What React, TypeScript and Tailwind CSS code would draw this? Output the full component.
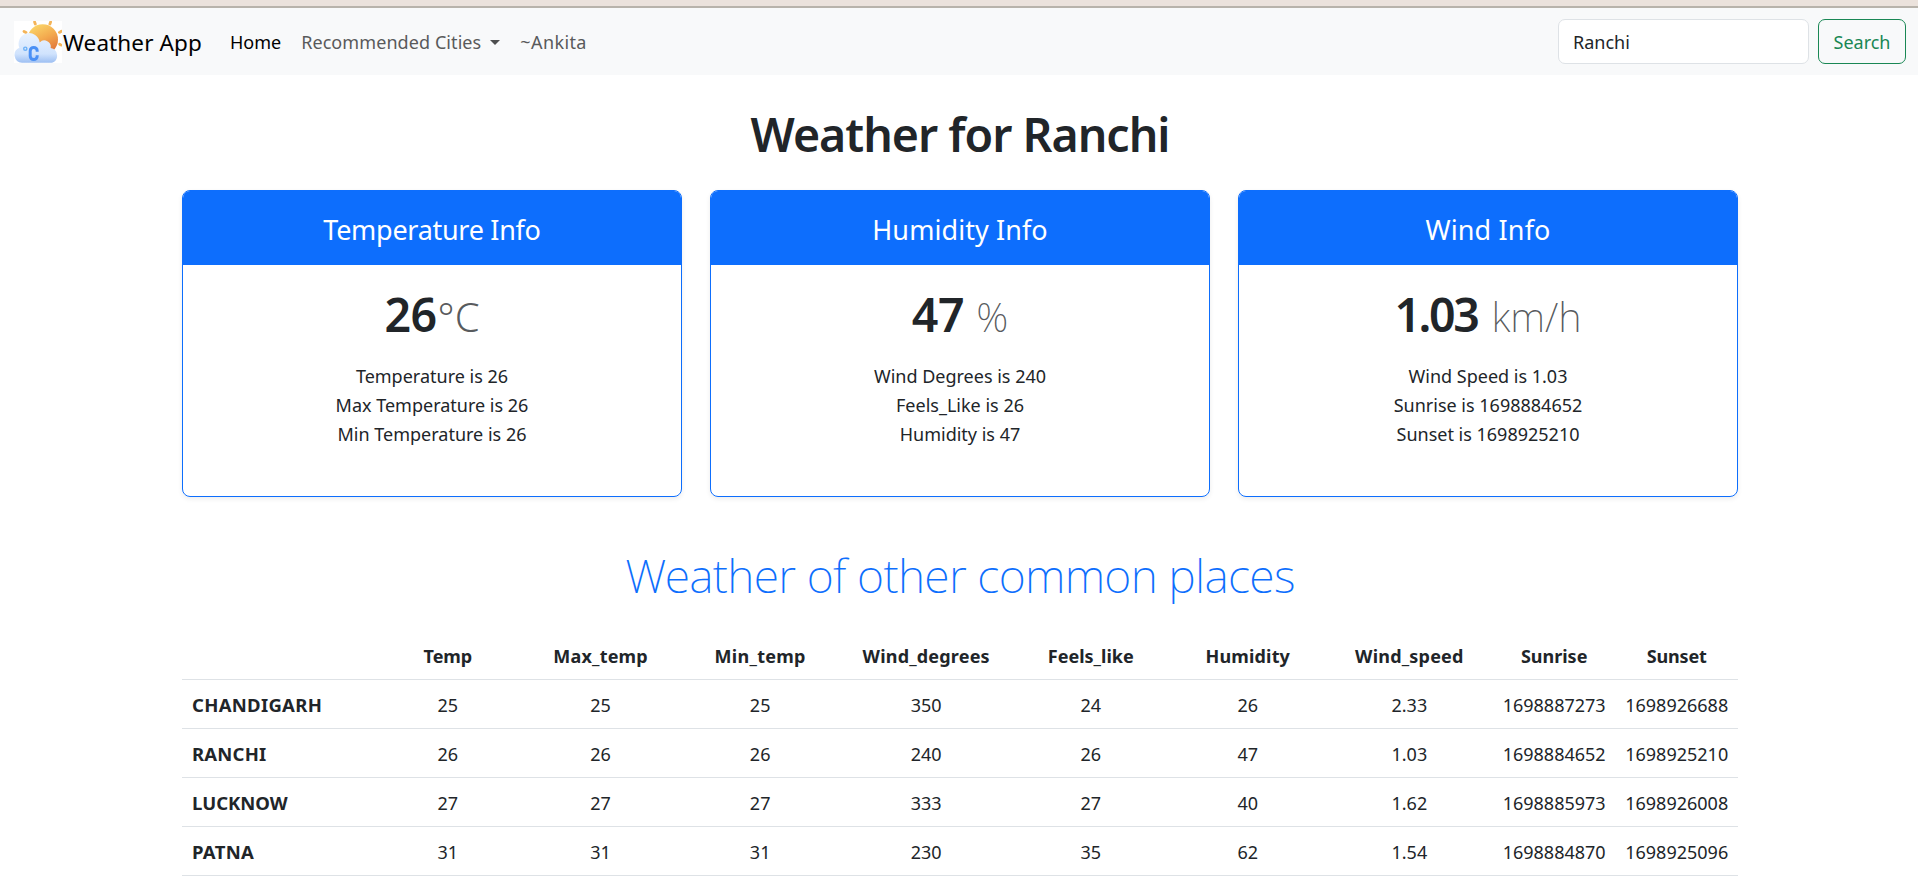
import React from "react";

const cards = [
  {
    title: "Temperature Info",
    titleClass: "tracking-[-0.29px]",
    value: "26",
    valueClass: "tracking-[-0.5px]",
    unit: "°C",
    unitClass: "font-light ml-px",
    lines: ["Temperature is 26", "Max Temperature is 26", "Min Temperature is 26"],
  },
  {
    title: "Humidity Info",
    titleClass: "tracking-[0.07px]",
    value: "47",
    valueClass: "tracking-[-0.3px]",
    unit: "%",
    unitClass: "font-extralight ml-[12px]",
    lines: ["Wind Degrees is 240", "Feels_Like is 26", "Humidity is 47"],
  },
  {
    title: "Wind Info",
    titleClass: "tracking-[0.14px]",
    value: "1.03",
    valueClass: "tracking-[-2.4px]",
    unit: "km/h",
    unitClass: "font-extralight ml-[14px]",
    lines: ["Wind Speed is 1.03", "Sunrise is 1698884652", "Sunset is 1698925210"],
  },
];

const columns = [
  { label: "", className: "w-[192px]" },
  { label: "Temp", className: "w-[147.5px] tracking-[-0.1px]" },
  { label: "Max_temp", className: "w-[158px] tracking-[0.19px]" },
  { label: "Min_temp", className: "w-[161px] tracking-[0.28px]" },
  { label: "Wind_degrees", className: "w-[171px] tracking-[0.19px]" },
  { label: "Feels_like", className: "w-[158px]" },
  { label: "Humidity", className: "w-[156px] tracking-[0.15px]" },
  { label: "Wind_speed", className: "w-[167px] tracking-[0.2px]" },
  { label: "Sunrise", className: "w-[122.5px]" },
  { label: "Sunset", className: "w-[122.5px] tracking-[-0.2px]" },
];

const rows = [
  { city: "CHANDIGARH", className: "tracking-[0.3px]", values: ["25", "25", "25", "350", "24", "26", "2.33", "1698887273", "1698926688"] },
  { city: "RANCHI", className: "tracking-[0.2px]", values: ["26", "26", "26", "240", "26", "47", "1.03", "1698884652", "1698925210"] },
  { city: "LUCKNOW", className: "tracking-[0px]", values: ["27", "27", "27", "333", "27", "40", "1.62", "1698885973", "1698926008"] },
  { city: "PATNA", className: "tracking-[0.3px]", values: ["31", "31", "31", "230", "35", "62", "1.54", "1698884870", "1698925096"] },
];

function Logo() {
  return (
    <svg width="48" height="42" viewBox="0 0 48 42" className="block shrink-0">
      <defs>
        <linearGradient id="sun" x1="0.2" y1="0" x2="0.7" y2="1">
          <stop offset="0" stopColor="#fbd96b" />
          <stop offset="0.5" stopColor="#f3a94e" />
          <stop offset="1" stopColor="#de6f38" />
        </linearGradient>
        <linearGradient id="cloud" x1="0" y1="0" x2="0" y2="1">
          <stop offset="0" stopColor="#eaf3ff" />
          <stop offset="0.7" stopColor="#d0e3fd" />
          <stop offset="1" stopColor="#9dbff2" />
        </linearGradient>
      </defs>
      <rect width="48" height="42" fill="#fff" />
      <path
        d="M20.6 1l.7 2M36.6 1l-.7 2M10 10.4l2 1.1M45.4 11.4l2-1.1M45.6 23.2l1.6.9"
        stroke="#f4b458"
        strokeWidth="2.8"
        strokeLinecap="round"
      />
      <circle cx="28.7" cy="18.6" r="15.3" fill="url(#sun)" />
      <path
        d="M8 41.8a7.8 7.8 0 0 1-2.6-15A10.6 10.6 0 1 1 25.7 21.4a6.4 6.4 0 0 1 10.9 5.7A7.6 7.6 0 0 1 38 41.8Z"
        fill="url(#cloud)"
      />
      <circle cx="11.3" cy="27.7" r="1.6" fill="none" stroke="#6db1f7" strokeWidth="1.4" />
      <path d="M23.2 30.8v-.9a3.5 3.5 0 0 0-7 0v5.2a3.5 3.5 0 0 0 7 0v-.9" fill="none" stroke="#4a90f5" strokeWidth="3" />
    </svg>
  );
}

export default function App() {
  return (
    <div className="min-h-[896px] w-full bg-white font-['Noto_Sans','Open_Sans',sans-serif] text-[18px] leading-[29px] text-[#212529]">
      <div className="h-2 border-b-2 border-[#b8b3ab] bg-[#ebe2dc]" />
      <nav className="flex h-[67px] items-center bg-[#f8f9fa] pr-3 pl-[14px]">
        <a className="flex items-center text-black">
          <Logo />
          <span className="pt-0.5 pl-px text-[22.5px] tracking-[0.11px]">Weather App</span>
        </a>
        <div className="ml-7 flex flex-1 items-center pt-0.5">
          <a className="text-black">Home</a>
          <a className="ml-5 flex items-center text-[#595a5b]">
            <span className="tracking-[0.08px]">Recommended Cities</span>
            <span className="ml-[9px] border-x-[5px] border-t-[5px] border-x-transparent border-t-[#4d4e4f]" />
          </a>
          <a className="ml-5 tracking-[0.39px] text-[#595a5b]">~Ankita</a>
        </div>
        <div className="flex gap-[9px]">
          <input
            defaultValue="Ranchi"
            className="h-[45px] w-[251px] rounded-[7px] border border-[#dee2e6] bg-white px-[14px] outline-none"
          />
          <button className="h-[45px] w-[88px] rounded-[7px] border border-[#198754] pt-px text-[#198754]">Search</button>
        </div>
      </nav>

      <main className="ml-[182px] w-[1556px]">
        <h1 className="flex h-[115px] items-center justify-center pt-[3px] text-[46.5px] leading-[58px] font-semibold tracking-[-1px]">
          Weather for Ranchi
        </h1>

        <div className="grid grid-cols-3 gap-[28px] text-center">
          {cards.map((c) => (
            <section
              key={c.title}
              className="h-[307px] overflow-hidden rounded-[8px] border border-[#0d6efd] shadow-[0_2px_5px_rgba(0,0,0,0.075)]"
            >
              <h4 className={`h-[74px] bg-[#0d6efd] pt-[21px] text-[27px] leading-[35px] text-white ${c.titleClass}`}>{c.title}</h4>
              <div className="pt-[20px]">
                <div className="flex items-baseline justify-center leading-[58px]">
                  <span className={`text-[46.5px] font-semibold ${c.valueClass}`}>{c.value}</span>
                  <span className={`text-[40px] text-[#212529]/75 ${c.unitClass}`}>{c.unit}</span>
                </div>
                <ul className="mt-[16px]">
                  {c.lines.map((l) => (
                    <li key={l}>{l}</li>
                  ))}
                </ul>
              </div>
            </section>
          ))}
        </div>

        <h2 className="flex h-[133px] items-center justify-center pt-[23px] text-[46.5px] leading-[58px] font-extralight tracking-[-0.72px] text-[#0d6efd]">
          Weather of other common places
        </h2>

        <table className="w-full table-fixed border-collapse text-center">
          <thead>
            <tr className="h-[49px] border-b border-[#dee2e6]">
              {columns.map((c) => (
                <th key={c.label} className={`p-0 pt-1 font-bold ${c.className}`}>
                  {c.label}
                </th>
              ))}
            </tr>
          </thead>
          <tbody>
            {rows.map((r) => (
              <tr key={r.city} className="h-[49px] border-b border-[#dee2e6]">
                <th className={`p-0 pt-0.5 pl-[10px] text-left text-[18.5px] font-bold ${r.className}`}>{r.city}</th>
                {r.values.map((v, i) => (
                  <td key={i} className="p-0 pt-1">
                    {v}
                  </td>
                ))}
              </tr>
            ))}
          </tbody>
        </table>
      </main>
    </div>
  );
}
